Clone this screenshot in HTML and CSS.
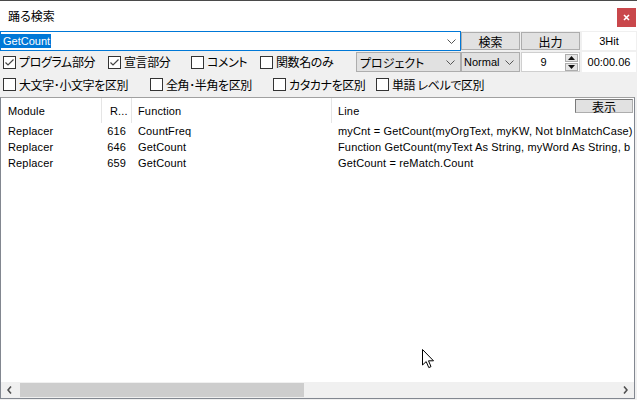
FILE: index.html
```html
<!DOCTYPE html>
<html lang="ja">
<head>
  <meta charset="UTF-8" />
  <title>踊る検索</title>
<link rel="stylesheet" href="styles.css">
</head>
<body>

<div class="window">

  <!-- Title bar -->
  <div class="titlebar">
    <span class="title">踊る検索</span>
    <span class="close">
      <svg width="7" height="7" viewBox="0 0 7 7"><path d="M1 1 L6 6 M6 1 L1 6" stroke="#fff" stroke-width="1.6"/></svg>
    </span>
  </div>

  <!-- Search row -->
  <div class="row row-search">
    <div class="combo">
      <span class="sel">GetCount</span>
      <svg class="chev" width="9" height="5" viewBox="0 0 9 5"><path d="M0.5 0.5 L4.5 4.5 L8.5 0.5" stroke="#555" fill="none"/></svg>
    </div>
    <button class="btn">検索</button>
    <button class="btn btn-out">出力</button>
    <span class="info">3Hit</span>
  </div>

  <!-- Options row -->
  <div class="row row-opts">
    <div class="checks checks-a">
      <label class="chk"><span class="box"><svg width="11" height="11" viewBox="0 0 11 11"><path d="M1.5 5.5 L4 8 L9.5 2.5" stroke="#444" stroke-width="1.2" fill="none"/></svg></span>プログラム部分</label>
      <label class="chk"><span class="box"><svg width="11" height="11" viewBox="0 0 11 11"><path d="M1.5 5.5 L4 8 L9.5 2.5" stroke="#444" stroke-width="1.2" fill="none"/></svg></span>宣言部分</label>
      <label class="chk"><span class="box"></span>コメント</label>
      <label class="chk"><span class="box"></span>関数名のみ</label>
    </div>
    <div class="select select-scope">
      <span class="jp">プロジェクト</span>
      <svg class="chev" width="9" height="5" viewBox="0 0 9 5"><path d="M0.5 0.5 L4.5 4.5 L8.5 0.5" stroke="#555" fill="none"/></svg>
    </div>
    <div class="select select-mode">
      <span>Normal</span>
      <svg class="chev" width="9" height="5" viewBox="0 0 9 5"><path d="M0.5 0.5 L4.5 4.5 L8.5 0.5" stroke="#555" fill="none"/></svg>
    </div>
    <div class="spin">
      <span class="spin-val">9</span>
      <span class="spin-btns">
        <span class="spin-btn"><svg width="7" height="4" viewBox="0 0 7 4"><path d="M0 4 L3.5 0 L7 4 Z" fill="#111"/></svg></span>
        <span class="spin-btn"><svg width="7" height="4" viewBox="0 0 7 4"><path d="M0 0 L3.5 4 L7 0 Z" fill="#111"/></svg></span>
      </span>
    </div>
    <span class="info info-time">00:00.06</span>
  </div>

  <!-- Match options -->
  <div class="row checks checks-b">
    <label class="chk"><span class="box"></span>大文字･小文字を区別</label>
    <label class="chk"><span class="box"></span>全角･半角を区別</label>
    <label class="chk"><span class="box"></span>カタカナを区別</label>
    <label class="chk"><span class="box"></span>単語 レベルで区別</label>
  </div>

  <!-- Result list -->
  <div class="list">
    <div class="list-head">
      <span class="cell c-mod">Module</span>
      <span class="cell c-row">R...</span>
      <span class="cell c-fn">Function</span>
      <span class="cell c-line">Line</span>
    </div>
    <div class="list-rows">
      <div class="list-row">
        <span class="cell c-mod">Replacer</span>
        <span class="cell c-row num">616</span>
        <span class="cell c-fn">CountFreq</span>
        <span class="cell c-line">myCnt = GetCount(myOrgText, myKW, Not bInMatchCase)</span>
      </div>
      <div class="list-row">
        <span class="cell c-mod">Replacer</span>
        <span class="cell c-row num">646</span>
        <span class="cell c-fn">GetCount</span>
        <span class="cell c-line">Function GetCount(myText As String, myWord As String, b</span>
      </div>
      <div class="list-row">
        <span class="cell c-mod">Replacer</span>
        <span class="cell c-row num">659</span>
        <span class="cell c-fn">GetCount</span>
        <span class="cell c-line">GetCount = reMatch.Count</span>
      </div>
    </div>
    <div class="hscroll">
      <span class="arrow">
        <svg width="5" height="8" viewBox="0 0 5 8"><path d="M4 0.5 L1 4 L4 7.5" stroke="#505050" stroke-width="1.6" fill="none"/></svg>
      </span>
      <span class="thumb"></span>
      <span class="track"></span>
      <span class="arrow">
        <svg width="5" height="8" viewBox="0 0 5 8"><path d="M1 0.5 L4 4 L1 7.5" stroke="#505050" stroke-width="1.6" fill="none"/></svg>
      </span>
    </div>
    <button class="show-btn">表示</button>
  </div>

  <!-- mouse pointer -->
  <svg class="cursor" width="13" height="20" viewBox="0 0 13 20">
    <path d="M0.5 0.5 L0.5 16 L4.2 12.6 L6.8 18.6 L9 17.6 L6.5 11.8 L11.5 11.8 Z" fill="#fff" stroke="#000" stroke-width="1"/>
  </svg>

</div>

</body>
</html>
```

FILE: styles.css
```css
body {
  margin: 0;
  font-family: "Liberation Sans", "Noto Sans CJK JP", sans-serif;
  font-size: 11px;
  color: #000;
  background-color: #f0f0f0;
}

.window {
  position: relative;
  width: 637px;
  height: 400px;
  display: flex;
  flex-direction: column;
  overflow: hidden;
}

/* title bar */
.titlebar {
  height: 30px;
  border-top: 1px solid #4a4a4a;
  background: #fff;
  display: flex;
  justify-content: space-between;
  align-items: flex-start;
}

.title {
  margin: 8px 0 0 8px;
  font-family: "Noto Sans CJK JP", sans-serif;
  font-size: 12px;
  line-height: 14px;
  font-feature-settings: "palt";
}

.close {
  width: 19px;
  height: 19px;
  margin: 7px 1px 0 0;
  background: #c9474b;
  display: flex;
  align-items: center;
  justify-content: center;
}

/* toolbar rows */
.row {
  display: flex;
  align-items: center;
}

.row-search {
  height: 20px;
  margin-bottom: 1px;
}

.row-opts {
  height: 20px;
}

.jp,
.chk,
.btn,
.show-btn {
  font-family: "Noto Sans CJK JP", sans-serif;
  font-size: 12px;
  font-feature-settings: "palt";
}

.chk {
  letter-spacing: -0.4px;
}

.combo {
  width: 461px;
  height: 20px;
  box-sizing: border-box;
  border: 1px solid #0078d7;
  background: #fff;
  display: flex;
  align-items: center;
  justify-content: space-between;
  padding: 0 4px 0 0;
}

.sel {
  background: #0078d7;
  color: #fff;
  line-height: 14px;
  padding: 0 1px 0 2px;
}

.chev {
  flex-shrink: 0;
}

.btn {
  width: 59px;
  height: 18px;
  box-sizing: border-box;
  border: 1px solid #adadad;
  background: #e1e1e1;
  color: #000;
  padding: 0;
  line-height: 15px;
}

.btn-out {
  margin-left: 1px;
}

.info {
  width: 54px;
  height: 18px;
  margin-left: 2px;
  background: #fff;
  text-align: center;
  line-height: 18px;
}

.info-time {
  height: 20px;
  line-height: 20px;
}

/* checkboxes */
.checks {
  display: grid;
  padding-left: 3px;
}

.checks-a {
  grid-template-columns: 105px 83px 69px 96px;
}

.checks-b {
  height: 25px;
  grid-template-columns: 147px 123px 103px auto;
  align-items: center;
}

.chk {
  display: flex;
  align-items: center;
  gap: 3px;
  white-space: nowrap;
  line-height: 16px;
}

.box {
  width: 13px;
  height: 13px;
  box-sizing: border-box;
  border: 1px solid #333;
  background: #fff;
  display: flex;
  align-items: center;
  justify-content: center;
  flex-shrink: 0;
}

/* dropdowns + spinner */
.select {
  height: 20px;
  box-sizing: border-box;
  border: 1px solid #adadad;
  background: #e1e1e1;
  display: flex;
  align-items: center;
  justify-content: space-between;
  padding: 0 5px 0 3px;
}

.select-scope {
  width: 105px;
}

.select-mode {
  width: 59px;
  padding-left: 2px;
}

.spin {
  width: 59px;
  height: 20px;
  margin-left: 1px;
  box-sizing: border-box;
  border: 1px solid #cfcfcf;
  background: #fff;
  display: flex;
  align-items: center;
}

.spin-val {
  flex: 1;
  text-align: center;
}

.spin-btns {
  width: 13px;
  margin-right: 1px;
  display: flex;
  flex-direction: column;
  gap: 1px;
}

.spin-btn {
  height: 8px;
  box-sizing: border-box;
  border: 1px solid #adadad;
  background: #e6e6e6;
  display: flex;
  align-items: center;
  justify-content: center;
}

/* result list */
.list {
  position: relative;
  flex: 1;
  margin: 0 2px 1px 0;
  border: 1px solid #828790;
  border-top-color: #a0a0a0;
  background: #fff;
  display: flex;
  flex-direction: column;
  overflow: hidden;
}

.list-head,
.list-row {
  display: grid;
  grid-template-columns: 101px 30px 200px 1fr;
  letter-spacing: 0.15px;
}

.list-head {
  height: 25px;
}

.list-head .cell {
  border-right: 1px solid #e5e5e5;
  padding-top: 7px;
  line-height: 13px;
}

.list-head .c-line {
  border-right: none;
}

.list-head .c-row {
  padding-left: 8px;
}

.list-rows {
  flex: 1;
}

.list-row {
  height: 16px;
  line-height: 16px;
}

.cell {
  white-space: nowrap;
  overflow: hidden;
  box-sizing: border-box;
}

.c-mod {
  padding-left: 7px;
}

.c-fn,
.c-line {
  padding-left: 6px;
}

.num {
  text-align: right;
  padding-right: 6px;
}

.show-btn {
  position: absolute;
  top: 1px;
  right: 1px;
  width: 58px;
  height: 14px;
  box-sizing: border-box;
  border: 1px solid #adadad;
  border-top-color: #7a7a7a;
  border-left-color: #7a7a7a;
  background: #e1e1e1;
  padding: 0;
  line-height: 11px;
}

/* horizontal scrollbar */
.hscroll {
  height: 16px;
  background: #f0f0f0;
  display: flex;
  align-items: center;
}

.arrow {
  width: 17px;
  height: 16px;
  display: flex;
  align-items: center;
  justify-content: center;
}

.thumb {
  width: 284px;
  height: 14px;
  margin-left: 2px;
  background: #cdcdcd;
}

.track {
  flex: 1;
}

.cursor {
  position: absolute;
  left: 422px;
  top: 349px;
}
```
